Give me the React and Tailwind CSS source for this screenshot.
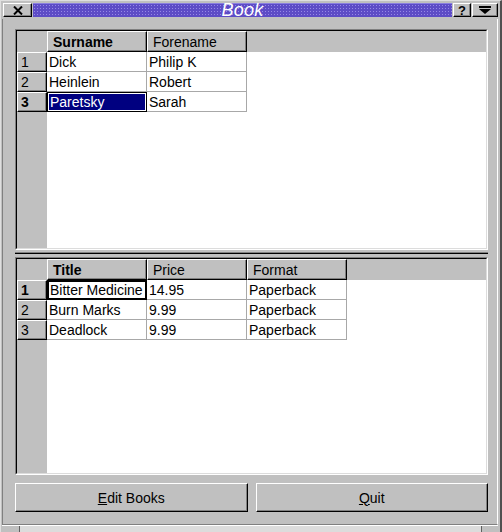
import { useState } from 'react'

const AUTHORS = [
  ['Dick', 'Philip K'],
  ['Heinlein', 'Robert'],
  ['Paretsky', 'Sarah'],
]

const BOOKS = [
  ['Bitter Medicine', '14.95', 'Paperback'],
  ['Burn Marks', '9.99', 'Paperback'],
  ['Deadlock', '9.99', 'Paperback'],
]

// raised bevel used by header sections and buttons
const raised = 'bg-[#c0c0c0] border-t border-l border-white border-r border-b border-r-black border-b-black shadow-[inset_-1px_-1px_0_#808080]'

function HeaderCell({ children, bold, width }) {
  return (
    <div className={`${raised} ${width} h-[21px] shrink-0 flex items-center pl-[5px] pt-[1px] overflow-hidden whitespace-nowrap ${bold ? 'font-bold' : ''}`}>
      {children}
    </div>
  )
}

function DataCell({ children, focus, selected }) {
  if (focus && selected) {
    return (
      <div className="w-[100px] h-[20px] shrink-0 border border-black">
        <div className="h-full border border-white bg-[#000080] text-white pl-[1px] leading-[17px] whitespace-nowrap overflow-hidden">
          {children}
        </div>
      </div>
    )
  }
  if (focus) {
    return (
      <div className="w-[100px] h-[20px] shrink-0 border-2 border-black bg-white pl-[1px] leading-[17px] whitespace-nowrap overflow-hidden">
        {children}
      </div>
    )
  }
  return (
    <div className="w-[100px] h-[20px] shrink-0 bg-white border-r border-b border-[#a8a8a8] pl-[2px] leading-[20px] whitespace-nowrap overflow-hidden">
      {children}
    </div>
  )
}

function Table({ headers, rows, current, selected, height }) {
  return (
    <div className={`${height} shrink-0 border-t border-l border-[#808080] border-r border-b border-r-white border-b-white`}>
      <div className="h-full flex flex-col border-t border-l border-black border-r border-b border-r-[#dcdcdc] border-b-[#dcdcdc] bg-white">
        {/* column headers */}
        <div className="flex shrink-0 bg-[#c0c0c0]">
          <div className="w-[30px] h-[21px] shrink-0 bg-[#c0c0c0]" />
          {headers.map((h, i) => (
            <HeaderCell key={h} width="w-[100px]" bold={i === 0}>{h}</HeaderCell>
          ))}
        </div>
        {/* rows */}
        {rows.map((r, ri) => (
          <div key={ri} className="flex shrink-0">
            <div className={`${raised} w-[30px] h-[20px] shrink-0 pl-[3px] leading-[18px] ${ri === current ? 'font-bold' : ''}`}>
              {ri + 1}
            </div>
            {r.map((c, ci) => (
              <DataCell key={ci} focus={ri === current && ci === 0} selected={selected && ri === current && ci === 0}>
                {c}
              </DataCell>
            ))}
          </div>
        ))}
        {/* empty area */}
        <div className="flex-1 flex">
          <div className="w-[30px] bg-[#c0c0c0]" />
          <div className="flex-1 bg-white" />
        </div>
      </div>
    </div>
  )
}

function Button({ children }) {
  return (
    <button className={`${raised} flex-1 h-[29px] flex items-center justify-center pt-[1px] text-[14px] text-black`}>
      {children}
    </button>
  )
}

export default function App() {
  const [clicks, setClicks] = useState(0)

  return (
    <div className="w-[502px] h-[532px] bg-[#c0c0c0] flex flex-col border-l border-t border-[#dfdfdf] border-r-2 border-r-[#505050] text-black text-[14px] font-['Liberation_Sans',Arial,sans-serif] overflow-hidden">
      {/* Title bar */}
      <div className="h-[18px] shrink-0 flex items-start pt-[2px] pl-[2px] pr-[2px] gap-[1px]">
        <div className={`${raised} w-[29px] h-[14px] flex items-center justify-center`}>
          <svg width="10" height="9" viewBox="0 0 10 9">
            <path d="M1 0.5 L9 8.5 M9 0.5 L1 8.5" stroke="black" strokeWidth="2" />
          </svg>
        </div>
        <div className="flex-1 h-[14px] bg-[#5d4cc6] bg-[radial-gradient(circle,#9587e6_0.8px,transparent_1px)] bg-[length:3px_3px] border-t border-[#8a7ee0] flex items-center justify-center">
          <span className="text-white italic text-[18px] leading-none tracking-[0.3px] -mt-[1px]">Book</span>
        </div>
        <div className={`${raised} w-[18px] h-[14px] flex items-center justify-center font-bold text-[13px] leading-none`}>?</div>
        <div className={`${raised} w-[26px] h-[14px] flex items-center justify-center`}>
          <svg width="12" height="8" viewBox="0 0 12 8">
            <rect x="0" y="0" width="12" height="2" fill="black" />
            <path d="M0 3 L12 3 L6 8 Z" fill="black" />
          </svg>
        </div>
      </div>

      {/* Client area */}
      <div className="h-[506px] shrink-0 ml-[1px] mr-[2px] flex flex-col border-l border-[#808080] border-b border-b-[#808080] border-r border-r-white pl-[12px] pr-[9px] pt-[10px]">
        <Table headers={['Surname', 'Forename']} rows={AUTHORS} current={2} selected height="h-[221px]" />

        {/* splitter */}
        <div className="h-[7px] shrink-0 flex flex-col pt-[2px]">
          <div className="h-[1px] bg-[#808080]" />
          <div className="h-[1px] bg-black" />
        </div>

        <Table headers={['Title', 'Price', 'Format']} rows={BOOKS} current={0} height="h-[218px]" />

        <div className="flex gap-[8px] mt-[8px]">
          <Button><span onClick={() => setClicks(clicks + 1)}><u>E</u>dit Books</span></Button>
          <Button><span><u>Q</u>uit</span></Button>
        </div>
      </div>

      {/* resize strip */}
      <div className="flex-1 flex ml-[1px] mr-[2px] border-t border-white">
        <div className="w-[18px] bg-[#c0c0c0] border-r border-[#606060]" />
        <div className="flex-1 bg-[#dcdcdc] border-r border-[#606060]" />
        <div className="w-[16px] bg-[#c0c0c0]" />
      </div>
    </div>
  )
}
